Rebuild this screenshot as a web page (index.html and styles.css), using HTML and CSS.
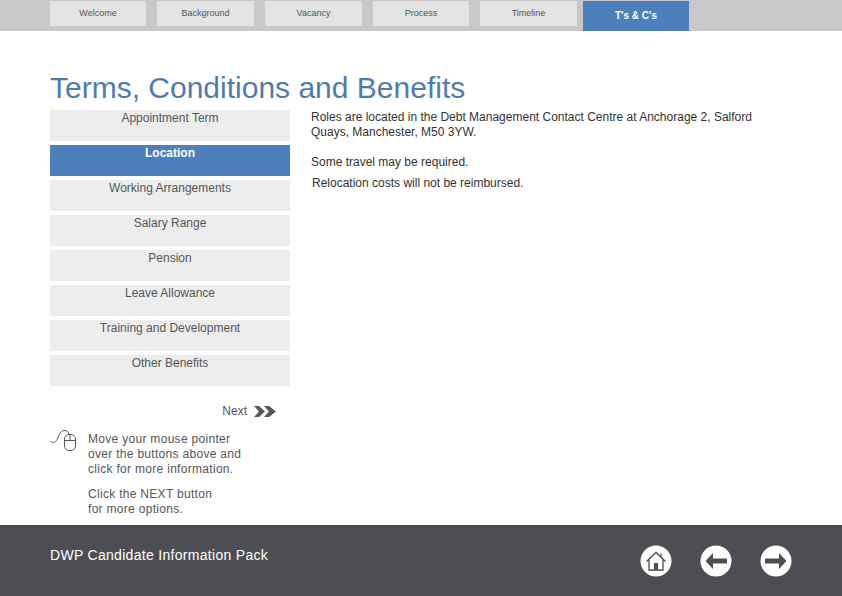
FILE: index.html
```html
<!DOCTYPE html>
<html lang="en">
<head>
<meta charset="utf-8">
<title>Terms, Conditions and Benefits</title>
<link rel="stylesheet" href="styles.css">
</head>
<body>
<nav class="tabs">
  <a class="tab w96">Welcome</a>
  <a class="tab">Background</a>
  <a class="tab">Vacancy</a>
  <a class="tab w96">Process</a>
  <a class="tab">Timeline</a>
  <a class="tab active">T's &amp; C's</a>
</nav>
<main class="page">
  <h1>Terms, Conditions and Benefits</h1>
  <div class="columns">
    <aside class="side">
      <ul class="menu">
        <li>Appointment Term</li>
        <li class="on">Location</li>
        <li>Working Arrangements</li>
        <li>Salary Range</li>
        <li>Pension</li>
        <li>Leave Allowance</li>
        <li>Training and Development</li>
        <li>Other Benefits</li>
      </ul>
      <div class="next">
        <span>Next</span>
        <svg width="22" height="11" viewBox="0 0 22 11"><path d="M0 0h5l6 5.5-6 5.500H0l5-5.500zM10 0h5l7 5.500-7 5.500h-5l5-5.500z" fill="#55565a"/></svg>
      </div>
      <div class="hint">
        <svg class="mouse" width="28" height="24" viewBox="0 0 28 24" fill="none" stroke="#55565a" stroke-width="1"><path d="M.5 13.500c3 2 5 1 6.500-2s3-8.500 7-9c3-.3 5 2 5 4"/><rect x="14.500" y="6.500" width="11" height="16" rx="4.500"/><path d="M14.500 12.500h11M20 6.500v6"/></svg>
        <div class="hint-text">
          <p>Move your mouse pointer<br>over the buttons above and<br>click for more information.</p>
          <p>Click the NEXT button<br>for more options.</p>
        </div>
      </div>
    </aside>
    <section class="body">
      <p class="p1">Roles are located in the Debt Management Contact Centre at Anchorage 2, Salford Quays, Manchester, M50 3YW.</p>
      <p class="p2">Some travel may be required.</p>
      <p class="p3">Relocation costs will not be reimbursed.</p>
    </section>
  </div>
</main>
<footer class="foot">
  <div class="foot-title">DWP Candidate Information Pack</div>
  <div class="foot-icons">
    <svg width="32" height="32" viewBox="0 0 32 32"><circle cx="16" cy="16" r="15.500" fill="#fff"/><path d="M6.500 16.500 16 7.500l9.500 9M9 14.500v10.500h14V14.500M21 11V8.500" fill="none" stroke="#4d4e53" stroke-width="1.300"/><rect x="14" y="18" width="4" height="7" fill="#4d4e53"/></svg>
    <svg width="32" height="32" viewBox="0 0 32 32"><circle cx="16" cy="16" r="15.500" fill="#fff"/><path d="M27 13.500H13V8L5.500 16l7.500 8v-5.500h14z" fill="#4d4e53" transform="translate(0 0)"/></svg>
    <svg width="32" height="32" viewBox="0 0 32 32"><circle cx="16" cy="16" r="15.500" fill="#fff"/><path d="M5 13.500h14V8l7.500 8-7.500 8v-5.500H5z" fill="#4d4e53"/></svg>
  </div>
</footer>
</body>
</html>
```
FILE: styles.css
```css
* { box-sizing: border-box; }
html, body { margin: 0; padding: 0; }
body {
  width: 842px;
  height: 596px;
  overflow: hidden;
  background: #fff;
  font-family: "Liberation Sans", Arial, sans-serif;
  display: flex;
  flex-direction: column;
}
.tabs {
  height: 31px;
  background: #c8c8c8;
  padding: 1px 0 0 50px;
  display: flex;
  align-items: flex-start;
  gap: 11px;
  flex: none;
}
.tab {
  width: 97px;
  height: 25px;
  background: #e3e3e3;
  color: #55565a;
  font-size: 9px;
  line-height: 25px;
  text-align: center;
}
.tab.w96 { width: 96px; }
.tab.active {
  width: 106px;
  height: 30px;
  margin-left: -5px;
  background: #4c7fbc;
  color: #fff;
  font-weight: bold;
  line-height: 29px;
  font-size: 10px;
}
.page { flex: 1; padding: 39px 0 0 50px; min-height: 0; }
h1 {
  margin: 0;
  font-size: 30px;
  line-height: 36px;
  font-weight: normal;
  color: #4f7cac;
  height: 40px;
}
.columns { display: flex; gap: 21px; }
.side { width: 240px; flex: none; }
.menu { list-style: none; margin: 0; padding: 0; display: flex; flex-direction: column; gap: 4px; }
.menu li {
  height: 31px;
  background: #ededed;
  color: #55565a;
  font-size: 12px;
  line-height: 14px;
  text-align: center;
  padding-top: 1px;
}
.menu li.on { background: #4c7fbc; color: #fff; font-weight: bold; }
.next {
  display: flex;
  justify-content: flex-end;
  align-items: center;
  gap: 7px;
  padding-right: 14px;
  margin-top: 18px;
  height: 14px;
  font-size: 12px;
  color: #55565a;
}
.hint { display: flex; margin-top: 14px; }
.mouse { flex: none; margin: -4px 10px 0 0; }
.hint-text { font-size: 12px; line-height: 15px; color: #55565a; letter-spacing: .3px; }
.hint-text p { margin: 0 0 10px; }
.body { width: 448px; font-size: 12px; line-height: 15px; color: #333; padding-top: 0; }
.body p { margin: 0; }
.p2 { margin-top: 15px !important; }
.p3 { margin: 6px 0 0 1px !important; }
.foot {
  height: 71px;
  flex: none;
  background: #4d4e53;
  padding: 0 50px;
  display: flex;
  justify-content: space-between;
  align-items: flex-start;
  color: #fff;
}
.foot-title { font-size: 14px; line-height: 16px; margin-top: 22px; letter-spacing: .3px; }
.foot-icons { display: flex; gap: 28px; margin: 20px 0 0; padding-right: 0; position: relative; left: 0; width: 152px; }
```
